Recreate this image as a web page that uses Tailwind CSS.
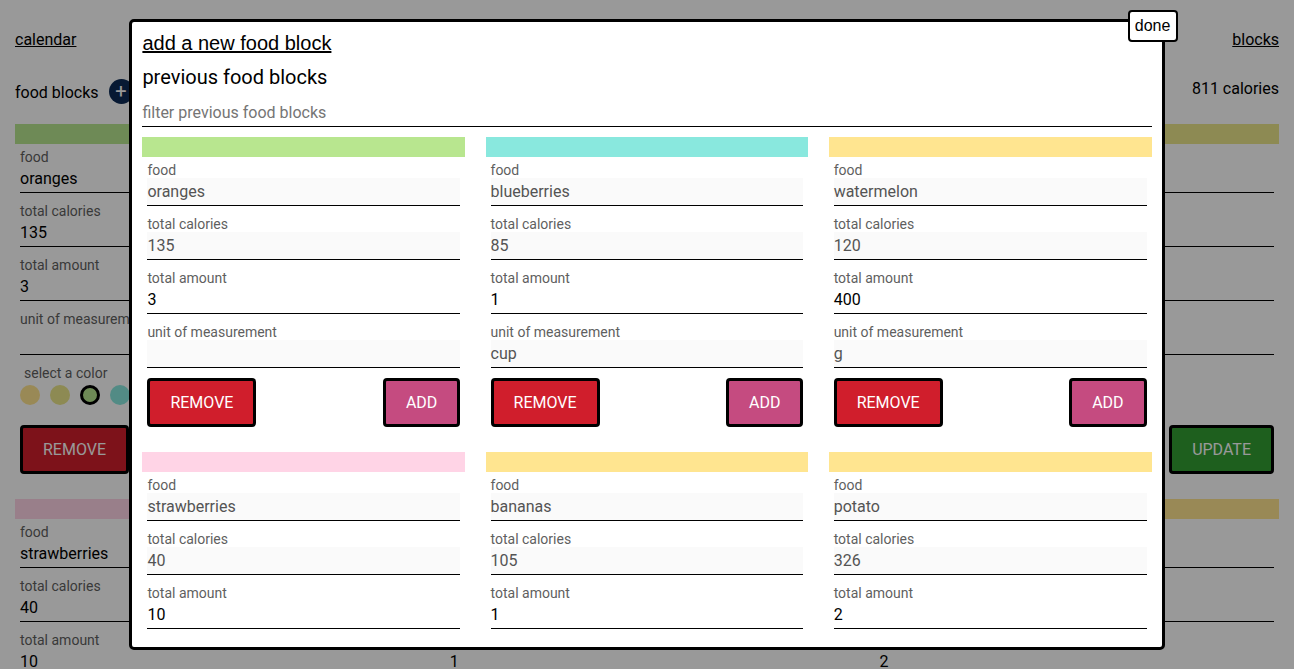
<!DOCTYPE html>
<html lang="en">
<head>
<meta charset="utf-8">
<title>food blocks</title>
<script src="https://cdn.jsdelivr.net/npm/@tailwindcss/browser@4"></script>
</head>
<body class="h-[669px] overflow-hidden bg-white font-[Roboto,sans-serif] text-base text-black">
<div class="h-[669px] overflow-hidden px-[15px] pt-[30px]">
  <nav class="flex h-[19px] justify-between leading-[19px]">
    <a class="underline">calendar</a>
    <a class="underline">blocks</a>
  </nav>
  <header class="mt-[29px] flex h-[26px] justify-between">
    <div class="flex items-center gap-[10px]">
      <span class="pt-[2px] leading-[19px]">food blocks</span>
      <span class="flex size-[25px] items-center justify-center rounded-full bg-[#0d2b55] text-[20px] leading-[25px] text-white">+</span>
    </div>
    <span class="pt-[1px] leading-[19px]">811 calories</span>
  </header>
  <main id="page-blocks" class="mt-[20px] flex flex-wrap justify-between"></main>
</div>

<div class="fixed inset-0 bg-black/40"></div>

<div class="fixed top-[19px] left-[129.4px] flex h-[631px] w-[1035.2px] flex-col rounded-[5px] border-3 border-black bg-white px-[10px] pb-[10px]">
  <button class="absolute -top-[12px] -right-[16px] h-[32px] w-[50px] rounded-[4px] border-2 border-black bg-white font-['Liberation_Sans',sans-serif] leading-[28px]">done</button>
  <div class="flex min-h-0 flex-1 flex-col overflow-hidden">
    <a class="mt-[10px] h-[23px] font-['Liberation_Sans',sans-serif] text-[20px] leading-[23px] underline">add a new food block</a>
    <h2 class="mt-[10px] h-[24px] text-[20px] leading-[24px]">previous food blocks</h2>
    <div class="mt-[10px] h-[28px] shrink-0 border-b border-black leading-[27px] text-[#757575]">filter previous food blocks</div>
    <section id="dialog-blocks" class="mt-[10px] flex flex-wrap justify-between"></section>
  </div>
</div>

<script>
const row = (label, value, disabled) => `
  <div class="mb-[5px] h-[49px]">
    <div class="h-[21px] pt-[5px] text-[14px] leading-[16px] text-[#5f5f5f]">${label}</div>
    <div class="h-[28px] border-b border-black leading-[27px] ${disabled ? 'bg-[#fafafa] text-[#545454]' : ''}">${value}</div>
  </div>`;
const button = (text, cls) =>
  `<button class="h-[49px] rounded-[4px] border-3 border-black px-[20px] text-white ${cls}">${text}</button>`;
const fields = (b, locked) =>
  row('food', b.food, locked) + row('total calories', b.cal, locked) +
  row('total amount', b.amount, false) + (b.partial ? '' : row('unit of measurement', b.unit, locked));
const yellow = 'bg-[#ffe590]', olive = 'bg-[#ebe68a]', green = 'bg-[#b8e68f]', teal = 'bg-[#89e8de]', pink = 'bg-[#ffd4e6]';

const pageBlocks = [
  {food: 'oranges', cal: 135, amount: 3, unit: '', color: green},
  {food: 'blueberries', cal: 85, amount: 1, unit: 'cup', color: teal},
  {food: 'watermelon', cal: 120, amount: 400, unit: 'g', color: olive},
  {food: 'strawberries', cal: 40, amount: 10, unit: '', color: pink},
  {food: 'bananas', cal: 105, amount: 1, unit: '', color: yellow},
  {food: 'potato', cal: 326, amount: 2, unit: '', color: yellow},
];
const dialogBlocks = pageBlocks.map((b, i) => i === 2 ? {...b, color: yellow} : b);
const swatches = b => [yellow, olive, green, teal, pink].map(c =>
  `<span class="size-[20px] rounded-full ${c} ${c === b.color ? 'border-3 border-black' : ''}"></span>`).join('');

document.getElementById('page-blocks').innerHTML = pageBlocks.map(b => `
  <article class="h-[375px] w-[32%]">
    <div class="h-[20px] ${b.color}"></div>
    <div class="px-[5px]">${fields(b, false)}
      <div class="h-[25px] pt-[5px] pl-[4px] text-[14px] leading-[16px] text-[#5f5f5f]">select a color</div>
      <div class="flex gap-[10px]">${swatches(b)}</div>
      <div class="mt-[20px] flex justify-between">${button('REMOVE', 'bg-[#d01e2c]')}${button('UPDATE', 'bg-[#329f33]')}</div>
    </div>
  </article>`).join('');
document.getElementById('dialog-blocks').innerHTML = dialogBlocks.map(b => `
  <article class="h-[315px] w-[32%]">
    <div class="h-[20px] ${b.color}"></div>
    <div class="px-[5px]">${fields(b, true)}
      <div class="mt-[10px] flex justify-between">${button('REMOVE', 'bg-[#d01e2c]')}${button('ADD', 'bg-[#c54b80]')}</div>
    </div>
  </article>`).join('');
</script>
</body>
</html>
